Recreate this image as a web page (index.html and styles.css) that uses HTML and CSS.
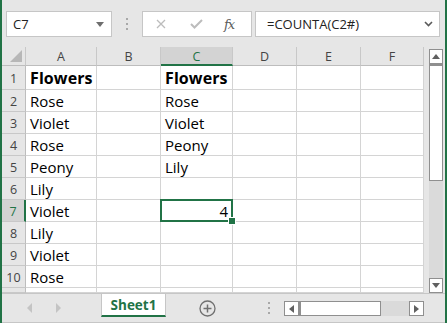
FILE: index.html
```html
<!DOCTYPE html>
<html lang="en">
<head>
  <meta charset="UTF-8">
  <title>Sheet1</title>
  <link rel="stylesheet" href="styles.css">
</head>
<body>

  <!-- Formula bar -->
  <div class="formula-bar">
    <div class="name-box">
      <span>C7</span>
      <svg width="8" height="5" viewBox="0 0 8 5"><polygon points="0,0 8,0 4,5" fill="#6e6e6e"/></svg>
    </div>
    <div class="grip"><i></i><i></i><i></i></div>
    <div class="fx-buttons">
      <svg class="fx-x" width="10" height="10" viewBox="0 0 10 10"><path d="M1 1 L9 9 M9 1 L1 9" stroke="#bcbcbc" stroke-width="1.3" fill="none"/></svg>
      <svg class="fx-ok" width="13" height="10" viewBox="0 0 13 10"><path d="M1 5 L4.5 8.5 L12 1" stroke="#bcbcbc" stroke-width="2" fill="none"/></svg>
      <span class="fx-label">fx</span>
    </div>
    <div class="formula-input">
      <span>=COUNTA(C2#)</span>
      <svg width="9" height="6" viewBox="0 0 9 6"><path d="M1 1 L4.5 4.5 L8 1" stroke="#5a5a5a" stroke-width="1.6" fill="none"/></svg>
    </div>
  </div>

  <!-- Sheet -->
  <div class="sheet-area">
    <div class="grid">
      <div class="hd corner"><svg width="12" height="12" viewBox="0 0 12 12"><polygon points="12,0 12,12 0,12" fill="#b7b7b7"/></svg></div>
      <div class="hd col">A</div>
      <div class="hd col">B</div>
      <div class="hd col active-col">C</div>
      <div class="hd col">D</div>
      <div class="hd col">E</div>
      <div class="hd col">F</div>

      <div class="hd row tall">1</div>
      <div class="cell bold">Flowers</div><div class="cell"></div><div class="cell bold">Flowers</div><div class="cell"></div><div class="cell"></div><div class="cell"></div>

      <div class="hd row">2</div>
      <div class="cell">Rose</div><div class="cell"></div><div class="cell">Rose</div><div class="cell"></div><div class="cell"></div><div class="cell"></div>

      <div class="hd row">3</div>
      <div class="cell">Violet</div><div class="cell"></div><div class="cell">Violet</div><div class="cell"></div><div class="cell"></div><div class="cell"></div>

      <div class="hd row">4</div>
      <div class="cell">Rose</div><div class="cell"></div><div class="cell">Peony</div><div class="cell"></div><div class="cell"></div><div class="cell"></div>

      <div class="hd row">5</div>
      <div class="cell">Peony</div><div class="cell"></div><div class="cell">Lily</div><div class="cell"></div><div class="cell"></div><div class="cell"></div>

      <div class="hd row">6</div>
      <div class="cell">Lily</div><div class="cell"></div><div class="cell"></div><div class="cell"></div><div class="cell"></div><div class="cell"></div>

      <div class="hd row active-row">7</div>
      <div class="cell">Violet</div><div class="cell"></div><div class="cell num selected">4</div><div class="cell"></div><div class="cell"></div><div class="cell"></div>

      <div class="hd row">8</div>
      <div class="cell">Lily</div><div class="cell"></div><div class="cell"></div><div class="cell"></div><div class="cell"></div><div class="cell"></div>

      <div class="hd row">9</div>
      <div class="cell">Violet</div><div class="cell"></div><div class="cell"></div><div class="cell"></div><div class="cell"></div><div class="cell"></div>

      <div class="hd row">10</div>
      <div class="cell">Rose</div><div class="cell"></div><div class="cell"></div><div class="cell"></div><div class="cell"></div><div class="cell"></div>

      <div class="hd row"></div>
      <div class="cell"></div><div class="cell"></div><div class="cell"></div><div class="cell"></div><div class="cell"></div><div class="cell"></div>
    </div>

    <div class="vscroll-wrap">
      <div class="vscroll">
        <div class="sb-btn"><svg width="8" height="5" viewBox="0 0 8 5"><polygon points="0,5 8,5 4,0" fill="#606060"/></svg></div>
        <div class="sb-thumb-v"></div>
        <div class="sb-track"></div>
        <div class="sb-btn"><svg width="8" height="5" viewBox="0 0 8 5"><polygon points="0,0 8,0 4,5" fill="#606060"/></svg></div>
      </div>
    </div>
  </div>

  <!-- Sheet tabs -->
  <div class="tab-bar">
    <div class="tab-nav">
      <svg width="14" height="10" viewBox="0 0 14 10"><polygon points="9,0 9,10 4,5" fill="#c4c4c4"/></svg>
      <svg width="14" height="10" viewBox="0 0 14 10"><polygon points="5,0 5,10 10,5" fill="#c4c4c4"/></svg>
    </div>
    <div class="tab">Sheet1</div>
    <div class="tab-add">
      <svg width="17" height="17" viewBox="0 0 17 17"><circle cx="8.5" cy="8.5" r="7.5" stroke="#707070" stroke-width="1.3" fill="none"/><path d="M8.5 4.5 V12.5 M4.5 8.5 H12.5" stroke="#707070" stroke-width="1.5"/></svg>
    </div>
    <div class="grip small"><i></i><i></i><i></i></div>
    <div class="hscroll">
      <div class="sb-btn h"><svg width="5" height="8" viewBox="0 0 5 8"><polygon points="5,0 5,8 0,4" fill="#606060"/></svg></div>
      <div class="sb-thumb-h"></div>
      <div class="sb-track h"></div>
      <div class="sb-btn h"><svg width="5" height="8" viewBox="0 0 5 8"><polygon points="0,0 0,8 5,4" fill="#606060"/></svg></div>
    </div>
  </div>

</body>
</html>
```

FILE: styles.css
```css
/* General */
* {
  margin: 0;
  padding: 0;
  box-sizing: border-box;
}

body {
  width: 447px;
  height: 323px;
  overflow: hidden;
  background-color: #e6e6e6;
  border-left: 2px solid #217346;
  border-right: 2px solid #217346;
  font-family: "Open Sans", "Noto Sans", sans-serif;
  color: #000;
  display: flex;
  flex-direction: column;
}

/* Formula bar */
.formula-bar {
  height: 47px;
  flex: none;
  display: flex;
  align-items: flex-start;
  padding: 11px 0 0 4px;
}

.name-box {
  width: 106px;
  height: 26px;
  background-color: #fff;
  border: 1px solid #c6c6c6;
  display: flex;
  align-items: center;
  justify-content: space-between;
  padding: 0 7px 0 6px;
  font-size: 13px;
  color: #222;
}

.grip {
  width: 30px;
  height: 26px;
  display: flex;
  flex-direction: column;
  align-items: center;
  justify-content: center;
  gap: 3px;
}

.grip i {
  display: block;
  width: 2px;
  height: 2px;
  background-color: #a8a8a8;
}

.fx-buttons {
  width: 110px;
  height: 26px;
  background-color: #fff;
  border: 1px solid #c6c6c6;
  display: flex;
  align-items: center;
  padding-left: 13px;
}

.fx-ok {
  margin-left: 24px;
}

.fx-label {
  margin-left: 21px;
  font-family: "DejaVu Serif", serif;
  font-style: italic;
  font-size: 13px;
  color: #5c5c5c;
  letter-spacing: -1px;
}

.formula-input {
  width: 185px;
  height: 26px;
  margin-left: 3px;
  background-color: #fff;
  border: 1px solid #c6c6c6;
  display: flex;
  align-items: center;
  justify-content: space-between;
  padding: 0 6px 0 11px;
  font-size: 13px;
  color: #222;
}

/* Sheet grid */
.sheet-area {
  height: 246px;
  flex: none;
  display: flex;
}

.grid {
  width: 422px;
  display: grid;
  grid-template-columns: 24px 71px 64px 72px 64px 64px 63px;
  grid-template-rows: 19px 24px repeat(9, 22px) 5px;
  background-color: #fff;
  border-right: 1px solid #bdbdbd;
}

.hd {
  background-color: #e6e6e6;
  color: #444;
  font-size: 12.5px;
  display: flex;
  align-items: center;
  justify-content: center;
}

.hd.corner {
  align-items: flex-end;
  justify-content: flex-end;
  padding: 0 3px 3px 0;
  border-right: 1px solid #c8c8c8;
  border-bottom: 1px solid #bdbdbd;
}

.hd.col {
  border-right: 1px solid #c8c8c8;
  border-bottom: 1px solid #bdbdbd;
  padding-top: 1px;
}

.hd.row {
  border-right: 1px solid #bdbdbd;
  border-bottom: 1px solid #c8c8c8;
  padding-top: 1px;
}

.hd.active-col {
  background-color: #d3d3d3;
  color: #217346;
  border-bottom: 2px solid #217346;
}

.hd.active-row {
  background-color: #d3d3d3;
  color: #217346;
  border-right: 2px solid #217346;
}

.cell {
  border-right: 1px solid #d4d4d4;
  border-bottom: 1px solid #d4d4d4;
  font-size: 15px;
  display: flex;
  align-items: center;
  padding: 1px 0 0 4px;
  white-space: nowrap;
  overflow: visible;
}

.cell.bold {
  font-weight: 700;
  font-size: 16px;
  letter-spacing: 0.1px;
}

.cell.num {
  justify-content: flex-end;
  padding-right: 4px;
}

.cell.selected {
  position: relative;
}

.cell.selected::after {
  content: "";
  position: absolute;
  top: -1px;
  left: -1px;
  right: -1px;
  bottom: -1px;
  border: 2px solid #217346;
  z-index: 2;
}

.cell.selected::before {
  content: "";
  position: absolute;
  right: -4px;
  bottom: -4px;
  width: 6px;
  height: 6px;
  background-color: #217346;
  border: 1px solid #fff;
  z-index: 3;
}

/* Scrollbars */
.vscroll-wrap {
  width: 21px;
  padding: 2px 2px 0 5px;
}

.vscroll {
  width: 14px;
  height: 244px;
  display: flex;
  flex-direction: column;
}

.sb-btn {
  flex: none;
  width: 14px;
  height: 15px;
  background-color: #fff;
  border: 1px solid #8f8f8f;
  display: flex;
  align-items: center;
  justify-content: center;
}

.sb-btn.h {
  width: 15px;
  height: 15px;
}

.sb-thumb-v {
  height: 117px;
  flex: none;
  background-color: #fff;
  border: 1px solid #8f8f8f;
  border-top-width: 2px;
}

.sb-track {
  flex: 1;
  background-color: #dadada;
}

/* Tab bar */
.tab-bar {
  flex: 1;
  display: flex;
  align-items: flex-start;
  border-top: 1px solid #c6c6c6;
  border-bottom: 1px solid #c6c6c6;
}

.tab-nav {
  width: 99px;
  height: 28px;
  display: flex;
  align-items: center;
  padding-left: 21px;
  gap: 14px;
}

.tab {
  width: 65px;
  height: 23px;
  background-color: #fff;
  border-left: 1px solid #c6c6c6;
  border-right: 1px solid #c6c6c6;
  border-bottom: 2px solid #217346;
  color: #217346;
  font-weight: 700;
  font-size: 13.5px;
  display: flex;
  align-items: center;
  justify-content: center;
}

.tab-add {
  width: 83px;
  height: 28px;
  display: flex;
  align-items: center;
  padding-left: 33px;
}

.grip.small {
  width: 2px;
  height: 28px;
  margin-left: 19px;
}

.hscroll {
  margin: 7px 0 0 14px;
  width: 140px;
  height: 15px;
  display: flex;
}

.sb-thumb-h {
  width: 82px;
  background-color: #fff;
  border: 1px solid #8f8f8f;
  border-left-width: 2px;
}

.sb-track.h {
  flex: 1;
}
```
